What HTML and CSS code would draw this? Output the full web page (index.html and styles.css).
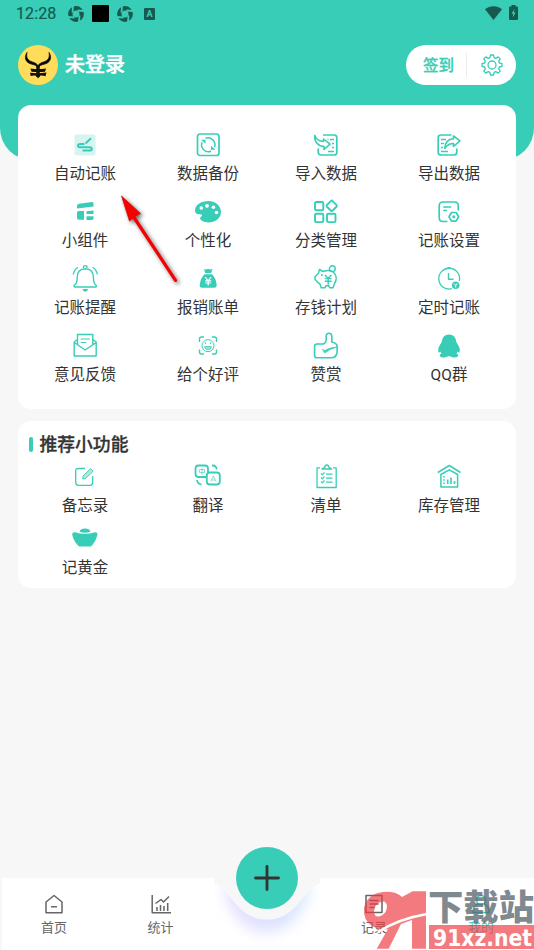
FILE: index.html
```html
<!DOCTYPE html>
<html lang="zh-CN">
<head>
<meta charset="utf-8">
<title>我的</title>
<link rel="stylesheet" href="styles.css">
</head>
<body>
<div class="screen">
  <header class="hero">
    <div class="status">
      <span class="clock">12:28</span>
      <svg class="st-sync" width="16" height="16" viewBox="0 0 16 16"><circle cx="8" cy="8" r="5.7" fill="none" stroke="currentColor" stroke-width="4.4"/><path d="M5 0L4.500 6.500M16 5L9.500 4.500M11 16L11.500 9.500M0 11L6.500 11.500" stroke="#38cdb7" stroke-width="1.800"/></svg>
      <span class="st-block"></span>
      <svg class="st-sync" width="16" height="16" viewBox="0 0 16 16"><circle cx="8" cy="8" r="5.7" fill="none" stroke="currentColor" stroke-width="4.4"/><path d="M5 0L4.500 6.500M16 5L9.500 4.500M11 16L11.500 9.500M0 11L6.500 11.500" stroke="#38cdb7" stroke-width="1.800"/></svg>
      <span class="st-a">A</span>
      <svg class="st-wifi" width="17" height="14" viewBox="0 0 17 14"><path d="M0 3.200C5-.9 12-.9 17 3.200L8.500 14Z" fill="currentColor"/></svg>
      <svg width="9" height="15" viewBox="0 0 9 15"><path d="M2.500 0h4v1.500H8q1 0 1 1V14q0 1-1 1H1q-1 0-1-1V2.500q0-1 1-1h1.500Z" fill="currentColor"/><path d="M5.500 4L2.500 8.700h1.800L3.700 12.500L6.700 7.500H4.900Z" fill="#38cdb7"/></svg>
    </div>
    <div class="profile">
      <svg class="avatar" width="40" height="40" viewBox="0 0 40 40"><circle cx="20" cy="20" r="20" fill="#ffdc5a"/><path d="M9 7.500C5.500 13 8 18 14 19.200C17 19.800 19 21 20 23C21 21 23 19.800 26 19.200C32 18 34.500 13 31 7.500C32.200 12.500 30 15.800 25.500 17C23 17.700 21 19 20 20.500C19 19 17 17.700 14.500 17C10 15.800 7.800 12.500 9 7.500Z" stroke="#111" stroke-width=".8"/><path d="M12.500 23.500q7.500 1 15.500 0l-1 3.200q-7 .6-13.500 0ZM12 27.800q8 .8 16.500-.2l-1 3.600q-3.500-1-5.500-.5l-1.900 2.800l-1.900-2.800q-2.700-.5-5.500.2Z" fill="#111"/><path d="M20 21v11" stroke="#111" stroke-width="3.500"/></svg>
      <span class="name">未登录</span>
      <div class="pill">
        <span class="sign">签到</span>
        <svg class="gear" width="22" height="22" viewBox="0 0 22 22"><path d="M9.500 1h3l.6 2.700l1.700.7l2.400-1.500l2 2l-1.500 2.400l.7 1.700l2.600.6v2.800l-2.600.6l-.7 1.700l1.500 2.400l-2 2l-2.400-1.500l-1.700.7l-.6 2.700h-3l-.6-2.700l-1.700-.7l-2.400 1.500l-2-2l1.500-2.400l-.7-1.700L1 12.400V9.600L3.600 9l.7-1.700l-1.500-2.400l2-2l2.400 1.500l1.700-.7Z"/><circle cx="11" cy="11" r="4"/></svg>
      </div>
    </div>
  </header>

  <section class="card tools">
    <div class="item"><svg viewBox="0 0 28 28"><rect x="3.500" y="3.500" width="21" height="21" rx="2" fill="#d7f4f0" stroke="none"/><path d="M14.500 12.500L20 7.300" stroke-width="2"/><path d="M13.500 13H9.500Q7 13 7 14.700T9.500 16.300H18.500Q20.800 16.300 20.800 17.900T18.500 19.500H11.500" stroke-width="2"/></svg><span>自动记账</span></div>
    <div class="item"><svg viewBox="0 0 28 28"><rect x="3.500" y="3" width="21.500" height="21.500" rx="2.500" stroke-width="1.700"/><path d="M11.500 7.300a7 7 0 0 1 9 9M17 20.300a7 7 0 0 1-9-9" stroke-width="1.500"/><path d="M7 8.800h4.500v4zM21.500 18.800H17v-4z" fill="currentColor" stroke="none"/></svg><span>数据备份</span></div>
    <div class="item"><svg viewBox="0 0 28 28"><path d="M11 4h11q2.800 0 2.800 2.500v15q0 2.500-2.800 2.500H9q-2.800 0-2.800-3v-3.500" stroke-width="1.700"/><path d="M2.800 4.500C4 8 7 10.300 11.500 10.500V8L18 13.200l-6 5.300v-3C6 15.200 2.300 11 2.800 4.500Z"/><path d="M18 8.500h4M20 12.500h2M20 16.500h2M16 20.500h6M15.500 8.500h1" stroke-width="1.500"/></svg><span>导入数据</span></div>
    <div class="item"><svg viewBox="0 0 28 28"><path d="M16.500 4H6Q3.200 4 3.200 6.500v15Q3.200 24 6 24h13q2.800 0 2.800-3v-3.500" stroke-width="1.700"/><path d="M25 9.800L18.500 5v2.700C13.500 8 10 11.500 9.800 17.500C12 14 15 12.500 18.500 12.500v3Z"/><path d="M6 8.500h5M6 12.500h3M6 16.500h2M6 20.500h7" stroke-width="1.500"/></svg><span>导出数据</span></div>

    <div class="item"><svg viewBox="0 0 28 28"><g fill="currentColor" stroke="none"><path d="M6 8q0-2 2-2.300l13-1.800q1.500 0 1.500 1.500v3L6 10.500ZM6 14.500q0-1.500 1.500-1.500H13v8.700H8q-2 0-2-1.700ZM15.500 13.300l7-.7v3.500h-7ZM15.500 18.200h7v2q0 1.700-1.500 1.700h-5.500Z"/></g></svg><span>小组件</span></div>
    <div class="item"><svg viewBox="0 0 28 28"><path d="M14.500 3C7 3 1 7 1 12.500C1 15 3 16.500 5 16.300c3 0 4 .9 2 2.500c-2 1-.5 3 1 4C15 27 27 23 27 14C27 7.500 21 3 14.500 3Z" fill="currentColor" stroke="none"/><g fill="#fff" stroke="none"><circle cx="7.300" cy="10" r="1.800"/><circle cx="13" cy="7.800" r="1.900"/><circle cx="19.400" cy="9.200" r="1.800"/><circle cx="22.500" cy="14.500" r="1.800"/></g></svg><span>个性化</span></div>
    <div class="item"><svg viewBox="0 0 28 28"><g stroke-width="1.900"><rect x="3" y="4" width="8.300" height="8.300" rx="1.300"/><rect x="3" y="15.800" width="8.300" height="8.300" rx="1.300"/><rect x="15" y="15.800" width="8.500" height="8.300" rx="1.300"/><rect x="15.700" y="3.800" width="8" height="8" rx="1.300" transform="rotate(45 19.700 7.800)"/></g></svg><span>分类管理</span></div>
    <div class="item"><svg viewBox="0 0 28 28"><path d="M12.500 23.500H8Q4.200 23.500 4.200 19.500V8Q4.200 4 8 4h11.500q3.800 0 3.800 4v4.500" stroke-width="1.700"/><path d="M8.200 9h8M8.200 12.500h3.800" stroke-width="1.600"/><path d="M16.500 14.500h4.600l2.600 4.300l-2.600 4.300h-4.600L14 18.800Z" stroke-width="1.700"/><circle cx="18.800" cy="18.800" r="1.500" fill="currentColor" stroke="none"/></svg><span>记账设置</span></div>

    <div class="item"><svg viewBox="0 0 28 28"><path d="M3.500 22q-1.500-1.200 1-2.800Q6.200 17.500 6.200 12Q6.300 4.200 14.300 3.800Q22.300 4.200 22.400 12Q22.400 17.500 24 19.200q2.300 1.600 1 2.800Z" stroke-width="1.400"/><path d="M12.500 3V1.200q1.700-1.200 3.500 0V3M7 2.200C4.200 4 2.800 6 2.200 9.500M21.600 2.200C24.400 4 25.800 6 26.400 9.500" stroke-width="1.300"/><path d="M11.500 24h5.500q-.5 2.700-2.750 2.700T11.500 24Z" fill="currentColor" stroke="none"/></svg><span>记账提醒</span></div>
    <div class="item"><svg viewBox="0 0 28 28"><path d="M10 4q2 1 4-.2q2 1.200 4.500.2l-1.300 4h-6ZM10.500 9.200h7.500Q22 13 22.600 19.500Q23 22.700 20 22.700H8Q5.300 22.700 5.800 19.500Q6.500 13 10.500 9.200Z" fill="currentColor" stroke="none"/><path d="M11.200 12l3 3.800L17 12M14.200 15.800V20.500M11.200 15.800h6M11.200 18h6" stroke="#fff" stroke-width="1.200"/></svg><span>报销账单</span></div>
    <div class="item"><svg viewBox="0 0 28 28"><path d="M7.500 4.500l3.500 2Q18 4.300 21.500 7.200Q26.500 12 22.500 18.500L21 22.800h-3.200l-1-2h-3l-1 2H9.200l-1.400-4q-2.500-.8-3.300-3L3 14.500v-2.800L6.300 8.500Z" stroke-width="1.500"/><circle cx="20.300" cy="3.700" r="2.900" stroke-width="1.400"/><circle cx="9.800" cy="10" r="1" fill="currentColor" stroke="none"/><path d="M13 10l3.200 3.500L19.400 10M16.200 13.500v6.200M12.800 13.600h6.800M12.800 16.300h6.800" stroke-width="1.400"/></svg><span>存钱计划</span></div>
    <div class="item"><svg viewBox="0 0 28 28"><path d="M16.800 23.700A10.400 10.400 0 1 1 24.300 16" stroke-width="1.300"/><path d="M14 2v1.500" stroke-width="3"/><path d="M13.500 8v6.300h5" stroke-width="1.400"/><circle cx="20.700" cy="20.300" r="3.800" fill="currentColor" stroke="none"/><path d="M19 18.500l1.700 2l1.700-2M20.700 20.500v2" stroke="#fff" stroke-width=".9"/></svg><span>定时记账</span></div>

    <div class="item"><svg viewBox="0 0 28 28"><path d="M6.500 7.500L3.200 10v14h22V10l-3.300-2.500M3.200 10.500L14.200 18l11-7.500M6.500 12.500V2.500h15.300v10" stroke-width="1.400"/><path d="M9.700 7h9M9.700 10.500h5.500" stroke-width="1.200"/></svg><span>意见反馈</span></div>
    <div class="item"><svg viewBox="0 0 28 28"><path d="M5.500 10V7q0-2 2-2h2.500M18 5h2.500q2 0 2 2v3M22.500 17.500V20q0 2-2 2H18M10 22H7.500q-2 0-2-2v-2.500" stroke-width="1.400"/><circle cx="14" cy="13.700" r="6" stroke-width="1"/><path d="M11.500 10.500v1.600M16.500 10.500v1.600" stroke-width="1.200"/><path d="M10.500 14.500h7q-.7 3.300-3.500 3.300t-3.500-3.300Z" fill="#8fe2d6" stroke-width=".7"/></svg><span>给个好评</span></div>
    <div class="item"><svg viewBox="0 0 28 28"><path d="M5 12h6.500q2.500-1.500 2.700-4V4q.3-2.700 2.800-2.700T19.800 4v6q4.800 1 5.300 4v6.300q-.7 5.500-6 5.500H5q-2.400 0-2.400-2.400v-9Q2.600 12 5 12Z"/><path d="M10.300 17.500l2.500 3.600Q18 17 24.800 15Q18 15.300 13 18.500Z" fill="currentColor" stroke-width=".6"/></svg><span>赞赏</span></div>
    <div class="item"><svg viewBox="0 0 28 28"><path d="M14 2.500Q20.600 2.700 21.500 10.500Q25.700 16 24.600 20.200q-1 .8-2-.8q0 1-1.100 2.200q2 .7 1.700 2.400q-1.700 2-5 1.500L14 24l-4.200 1.500q-4 .5-5-1.500q-.3-1.700 1.700-2.400Q5.500 20.400 5.400 19.400q-1 1.600-2 .8Q2.300 16 6.500 10.500Q7.400 2.700 14 2.500Z" fill="currentColor" stroke="none"/></svg><span>QQ群</span></div>
  </section>

  <section class="card extras">
    <h2>推荐小功能</h2>
    <div class="grid">
      <div class="item"><svg viewBox="0 0 28 28"><path d="M14 5.500H7.500Q4.700 5.500 4.700 8v11.500Q4.700 22.300 7.500 22.300h11.500q2.700 0 2.700-2.800V13" stroke-width="1.300"/><path d="M12 13L19.500 5.700l2.600 2.500L14.500 15.500L11.800 16Z" fill="#aee9e0" stroke-width=".9"/></svg><span>备忘录</span></div>
      <div class="item"><svg viewBox="0 0 28 28"><path d="M14 9.500V5.500Q14 2.500 11 2.500H4.500Q1.500 2.500 1.500 5.500v5.500q0 3 3 3H12M18 2.500q4.500-.3 4.700 4M3 17q.5 4 4.500 4.500" stroke-width="1.800"/><rect x="12.800" y="9.500" width="13" height="12" rx="3" stroke-width="1.800"/><path d="M5.500 6.500h5v3h-5ZM8 5v7M16.800 18.500L19.400 13l2.600 5.500M17.800 17h3.300" stroke-width=".6"/></svg><span>翻译</span></div>
      <div class="item"><svg viewBox="0 0 28 28"><path d="M8 4.800H5V24.500h19.200V4.800H21" stroke-width="1.300"/><path d="M10 6L13 4q0-2 1.800-2T16.600 4l3 2Z" stroke-width="1.500"/><path d="M14 11.200h6.500M14 15.200h6.500M14 19.200h6.500M9 10.500l1.300 1.300L12.500 9.500M9 14.500l1.300 1.300l2.200-2.300M9 18.500l1.300 1.300l2.200-2.300" stroke-width="1.200"/></svg><span>清单</span></div>
      <div class="item"><svg viewBox="0 0 28 28"><path d="M2.800 9.500L14.300 2.500L25.500 9.500M5.900 24V11.500L14.300 6.800l8.300 4.700V24Z" stroke-width="1.500"/><path d="M9 13v1.500M9 16.200v1.500M9 19.500V21M12.700 16.500V21M16 14.500V21M19.500 18v3" stroke-width="1.600"/></svg><span>库存管理</span></div>
      <div class="item"><svg viewBox="0 0 28 28"><g fill="currentColor" stroke="none"><path d="M1.300 10Q.8 7 4 7.200Q14 10.300 24 7.200q2.900-.2 2.400 2.800Q25 16 21 20.500q-.8.900-2 .9H9q-1.200 0-2-.9Q2.600 16 1.300 10Z"/><path d="M8.500 6.800Q9.500 3.500 14 3.500T19.500 6.800Q14 8.800 8.500 6.800Z"/></g></svg><span>记黄金</span></div>
    </div>
  </section>

  <nav class="tabbar">
    <div class="tab"><svg viewBox="0 0 20 20"><path d="M2 8L10 1.500L18 8v10.700H2ZM7 12.800h6"/></svg><span>首页</span></div>
    <div class="tab"><svg viewBox="0 0 20 20"><path d="M1.200 1v17.700H20M6 17v-4M9.500 17v-6M13 17v-5M16.700 17V9M4.500 9.500L10 5.500l2.500 2.500L18 2.500"/></svg><span>统计</span></div>
    <div class="hub">
      <svg class="notch" width="106" height="72" viewBox="0 0 106 72">
        <defs><linearGradient id="tint"><stop stop-color="#e6dcff"/><stop offset="1" stop-color="#d6e8ff"/></linearGradient><filter id="soft" x="-30%" y="-30%" width="160%" height="160%"><feGaussianBlur stdDeviation="7"/></filter><clipPath id="dip"><path d="M0 5C20 14 23 41.500 53 41.500S86 14 106 5V72H0Z"/></clipPath></defs>
        <g clip-path="url(#dip)"><path d="M0 0h106v72H0Z" fill="#fff"/><path d="M8 8C15 25 23 54 53 54S91 25 98 8Z" fill="url(#tint)" filter="url(#soft)"/></g>
      </svg>
      <div class="add"><svg width="26" height="26" viewBox="0 0 26 26"><path d="M13 1.500v23M1.500 13h23"/></svg></div>
    </div>
    <div class="tab"><svg viewBox="0 0 20 20"><path d="M2 1.500h16v17H2ZM5.500 6.500h9M5.500 10h9M5.500 13.500h5"/></svg><span>记录</span></div>
    <div class="tab active"><svg viewBox="0 0 20 20"><circle cx="10" cy="6" r="4.500"/><path d="M7 10Q2 11.500 2 18.500h16Q18 11.500 13 10"/></svg><span>我的</span></div>
  </nav>

  <svg class="pointer" width="70" height="100" viewBox="0 0 70 100"><path d="M6.500 6L25.500 23.500L20.500 26L14.500 31Z" fill="#f60000" stroke="#d00" stroke-width=".7"/><path d="M18 26L60.500 90.300" stroke="#f60000" stroke-width="3.200" stroke-linecap="round"/></svg>

  <svg class="mark" width="174" height="62" viewBox="0 0 174 62">
    <g fill="#ed3d43" fill-opacity=".68"><path fill-rule="evenodd" d="M23 4Q36 3 42 9L52.700 3.300H66V60.700H52V32L41 36L28.700 60.700H16.700L28 41Q20 43 12 38Q3 32 4 20Q7 6 23 4ZM22 13.500Q15 15 14 23Q14 29 19 28.500Q26 27 27 19Q27 13 22 13.500Z"/></g>
    <path d="M18 44Q38 31 67 26" fill="none" stroke="#fff" stroke-width="2.500"/>
    <text class="mark-title" x="68" y="32" textLength="106" lengthAdjust="spacingAndGlyphs">下载站</text>
    <rect x="69" y="37" width="105" height="24" fill="#ed3d43" fill-opacity=".68"/>
    <text class="mark-url" x="73" y="57.500" textLength="99" lengthAdjust="spacingAndGlyphs">91xz.net</text>
  </svg>
</div>
</body>
</html>
```
FILE: styles.css
```css
* { box-sizing: border-box; }
body {
  margin: 0;
  background: #f7f7f7;
  color: #333;
  font-family: Roboto, "Noto Sans CJK SC", sans-serif;
}
.screen {
  position: relative;
  width: 534px;
  height: 950px;
  overflow: hidden;
  display: flex;
  flex-direction: column;
}
.hero {
  flex: none;
  height: 160px;
  background: #38cdb7;
  border-radius: 0 0 32px 32px;
}
.status {
  height: 28px;
  padding: 0 16px;
  display: flex;
  align-items: center;
  color: #17594f;
}
.clock {
  width: 52px;
  font-size: 16px;
  font-weight: 400;
  line-height: 28px;
  letter-spacing: .1px;
  -webkit-text-stroke: .2px currentColor;
}
.status svg { display: block; flex: none; margin-top: -3px; }
.status .st-sync { margin-top: -1px; }
.st-block { width: 17px; height: 17px; margin: -1px 8px 0; background: #000; border-radius: 1px; }
.st-a {
  width: 11px;
  height: 12px;
  margin-left: 11px;
  background: #17594f;
  border-radius: 1px;
  color: #38cdb7;
  font-size: 9px;
  font-weight: 700;
  line-height: 12px;
  text-align: center;
}
.status .st-wifi { margin-left: auto; margin-right: 7px; }
.profile {
  height: 41px;
  margin: 16px 18px 0;
  display: flex;
  align-items: center;
}
.name {
  margin-left: 7px;
  padding-top: 1px;
  color: #fff;
  font-size: 20px;
  font-weight: 500;
  line-height: 40px;
  -webkit-text-stroke: .5px currentColor;
}
.pill {
  width: 110px;
  height: 40px;
  margin-left: auto;
  border-radius: 20px;
  background: #fff;
  color: #38cdb7;
  display: flex;
  align-items: center;
}
.sign {
  width: 61px;
  padding: 2px 0 0 17px;
  border-right: 1px solid #ebebeb;
  font-size: 15.5px;
  font-weight: 500;
  line-height: 22px;
  -webkit-text-stroke: .3px currentColor;
}
.gear { margin-left: 13.5px; fill: none; stroke: currentColor; stroke-width: 1.3; stroke-linejoin: round; }
.card {
  flex: none;
  margin: 0 18px;
  background: #fff;
  border-radius: 13px;
}
.tools, .grid {
  display: grid;
  grid-template-columns: 122px 124px 112px 134px;
  padding-left: 6px;
}
.tools {
  height: 304px;
  margin-top: -55px;
  padding-top: 26px;
  grid-auto-rows: 67px;
}
.item {
  display: flex;
  flex-direction: column;
  align-items: center;
}
.item svg {
  width: 28px;
  height: 28px;
  color: #38cdb7;
  fill: none;
  stroke: currentColor;
  stroke-width: 1.6;
  stroke-linejoin: round;
  overflow: visible;
}
.item span {
  margin-top: 4px;
  font-size: 15.5px;
  line-height: 22px;
  white-space: nowrap;
}
.extras { height: 167px; margin-top: 12px; padding-top: 12px; }
.extras h2 {
  margin: 0 0 0 11px;
  display: flex;
  align-items: center;
  gap: 6.5px;
  font-size: 17.8px;
  font-weight: 500;
  line-height: 24px;
  -webkit-text-stroke: .3px currentColor;
}
.extras h2::before {
  content: "";
  width: 4px;
  height: 15px;
  margin-top: -2px;
  border-radius: 2px;
  background: #38cdb7;
}
.grid { margin-top: 6px; grid-auto-rows: 62px; }
.tabbar {
  height: 72px;
  margin-top: auto;
  display: grid;
  grid-template-columns: 108px 106px 106px 107px 107px;
  background: linear-gradient(90deg, transparent 2px, #fff 2px, #fff 214px, transparent 214px, transparent 320px, #fff 320px);
}
.tab {
  display: flex;
  flex-direction: column;
  align-items: center;
  padding-top: 16px;
  color: #666;
}
.tab:nth-child(2) { padding-right: 1px; }
.tab:nth-child(4) { padding-left: 1px; }
.tab svg { width: 20px; height: 20px; fill: none; stroke: currentColor; stroke-width: 1.5; stroke-linejoin: round; }
.tab span { margin-top: 4px; font-size: 13px; line-height: 20px; }
.tab.active { padding-left: 1px; color: #38cdb7; }
.hub { position: relative; }
.notch { display: block; }
.add {
  position: absolute;
  left: 22px;
  top: -31px;
  width: 62px;
  height: 62px;
  border-radius: 50%;
  background: #38cdb7;
  display: grid;
  place-items: center;
}
.add svg { stroke: #333; stroke-width: 2.8; stroke-linecap: round; }
.pointer {
  position: absolute;
  left: 115px;
  top: 190px;
  filter: drop-shadow(2px 2px 2px rgba(0, 0, 0, .6));
}
.mark { position: absolute; left: 360px; top: 888px; }
.mark-title {
  font: 900 35px "Noto Sans CJK SC", sans-serif;
  fill: #5b6872;
  fill-opacity: .78;
}
.mark-url { font: 700 23px "DejaVu Sans", sans-serif; fill: #fff; }
```
